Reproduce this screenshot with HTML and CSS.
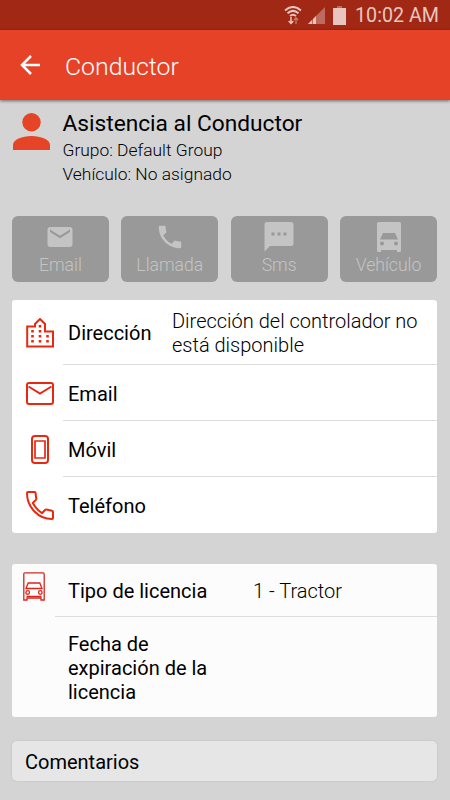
FILE: index.html
```html
<!DOCTYPE html>
<html lang="es">
<head>
  <meta charset="UTF-8">
  <title>Conductor</title>
  <link rel="stylesheet" href="styles.css">
</head>
<body>
  <div class="status">
    <svg class="wifi" width="18" height="19" viewBox="0 0 18 19" fill="none" stroke="#e8c5bf">
      <path d="M1 4.500Q9-2.500 17 4.500M3.500 7.300Q9 2.500 14.500 7.300M6 10Q9 7.500 12 10" stroke-width="2"/>
      <path d="M7 11v6M4.700 15L7 17.500 9.300 15" stroke-width="1.500"/>
      <path d="M12 18v-6M10 14l2-2.200L14 14" stroke="#c77c70" stroke-width="1.300"/>
    </svg>
    <svg class="signal" width="17" height="17" viewBox="0 0 17 17">
      <path d="M17 0v17H0z" fill="#bd6b5e"/>
      <path d="M0 17l4-4v4zM5 17v-5l3-3v8z" fill="#e8c5bf"/>
    </svg>
    <svg class="battery" width="13" height="19" viewBox="0 0 13 19">
      <path d="M4 0h5v2H4z" fill="#bd6b5e"/>
      <path d="M0 2h13v17H0z" fill="#e8c5bf"/>
    </svg>
    <span>10:02 AM</span>
  </div>

  <header>
    <svg width="20" height="20" viewBox="0 0 20 20" fill="none" stroke="#fff" stroke-width="2.500">
      <path d="M20 10H2M11 1l-9 9 9 9"/>
    </svg>
    <h1>Conductor</h1>
  </header>

  <div class="container">
    <div class="driver">
      <svg width="37" height="37" viewBox="0 0 37 37" fill="#e64427">
        <circle cx="18.500" cy="9.300" r="9.200"/>
        <path d="M0 37v-5c0-5.500 9-9 18.500-9S37 26.500 37 32v5z"/>
      </svg>
      <div>
        <h2>Asistencia al Conductor</h2>
        <p>Grupo: Default Group</p>
        <p>Vehículo: No asignado</p>
      </div>
    </div>

    <div class="actions">
      <button>
        <svg width="30" height="30" viewBox="0 0 24 24"><path d="M20 4H4c-1.100 0-2 .9-2 2v12c0 1.100.9 2 2 2h16c1.100 0 2-.9 2-2V6c0-1.100-.9-2-2-2zm0 4l-8 5-8-5V6l8 5 8-5z"/></svg>
        <span>Email</span>
      </button>
      <button>
        <svg width="30" height="30" viewBox="0 0 24 24"><path d="M6.620 10.790c1.440 2.830 3.760 5.140 6.590 6.590l2.200-2.200c.27-.27.67-.36 1.020-.24 1.120.37 2.330.57 3.570.57.550 0 1 .45 1 1V20c0 .55-.45 1-1 1-9.390 0-17-7.610-17-17 0-.55.45-1 1-1h3.500c.55 0 1 .45 1 1 0 1.250.2 2.450.57 3.570.11.35.03.74-.25 1.020z"/></svg>
        <span>Llamada</span>
      </button>
      <button>
        <svg width="30" height="30" viewBox="0 0 30 30"><path fill-rule="evenodd" d="M3 0h24a2.500 2.500 0 0 1 2.500 2.500v19A2.500 2.500 0 0 1 27 24H6L.5 29.500v-27A2.500 2.500 0 0 1 3 0zM7.500 10.500v3h3v-3zM13.500 10.500v3h3v-3zM19.500 10.500v3h3v-3z"/></svg>
        <span>Sms</span>
      </button>
      <button>
        <svg width="24" height="30" viewBox="0 0 24 30"><path fill-rule="evenodd" d="M1.500 0h21A1.500 1.500 0 0 1 24 1.500v27A1.500 1.500 0 0 1 22.500 30H20v-2H4v2H1.500A1.500 1.500 0 0 1 0 28.500v-27A1.500 1.500 0 0 1 1.500 0zM6 11l-3 6.500h18L18 11zM5 19.500a2 2 0 1 0 0 4 2 2 0 0 0 0-4zM19 19.500a2 2 0 1 0 0 4 2 2 0 0 0 0-4z"/></svg>
        <span>Vehículo</span>
      </button>
    </div>

    <div class="card contact">
      <div class="row address">
        <div class="icon">
          <svg width="28" height="30" viewBox="0 0 28 30" fill="none" stroke="#e62a10" stroke-width="2">
            <path d="M1.200 28.500V8.500H9V6l5-5 5 5v7.500h8v15z"/>
            <path d="M6.500 12v13M14 7v18M21.500 17v8" stroke-width="2.600" stroke-dasharray="2.600 2.400"/>
          </svg>
        </div>
        <div class="fields">
          <span class="label">Dirección</span>
          <span class="value">Dirección del controlador no está disponible</span>
        </div>
      </div>
      <div class="row">
        <div class="icon">
          <svg width="28" height="23" viewBox="0 0 28 23" fill="none" stroke="#e62a10" stroke-width="2">
            <rect x="1" y="1" width="26" height="21" rx="2"/>
            <path d="M2.500 4.500L14 11.500 25.500 4.500"/>
          </svg>
        </div>
        <div class="fields"><span class="label">Email</span></div>
      </div>
      <div class="row">
        <div class="icon">
          <svg width="18" height="29" viewBox="0 0 18 29" fill="none" stroke="#e62a10" stroke-width="2">
            <rect x="1" y="1" width="16" height="27" rx="3"/>
            <path d="M4 6h10v17H4z" stroke-width="1.700"/>
          </svg>
        </div>
        <div class="fields"><span class="label">Móvil</span></div>
      </div>
      <div class="row">
        <div class="icon">
          <svg width="28" height="29" viewBox="0 0 28 29" fill="none" stroke="#e62a10" stroke-width="2" stroke-linejoin="round">
            <path d="M2 1h6.500q1 0 1 1l.8 5.500q.1.800-.4 1.400L6.800 12q4 7 9.200 10.200l3-3.200q.6-.6 1.400-.4l5.600 1.200q1 .2 1 1.200v6q0 1-1 1C12 28 1 16 1 2q0-1 1-1z"/>
          </svg>
        </div>
        <div class="fields"><span class="label">Teléfono</span></div>
      </div>
    </div>

    <div class="card license">
      <div class="row">
        <div class="icon">
          <svg width="22" height="29" viewBox="0 0 22 29" fill="none" stroke="#d8261c" stroke-width="1.300">
            <path d="M2 .8h18q1.200 0 1.200 1.200v26H18v-2H4v2H.8V2Q.8.8 2 .8z"/>
            <path d="M3 16.500l2.200-5.500h11.600l2.200 5.500zM3.500 24.500h15"/>
            <circle cx="4.700" cy="20.500" r="1.800"/>
            <circle cx="17.300" cy="20.500" r="1.800"/>
          </svg>
        </div>
        <div class="fields">
          <span class="label">Tipo de licencia</span>
          <span class="value">1 - Tractor</span>
        </div>
      </div>
      <div class="row expiry">
        <div class="icon"></div>
        <div class="fields"><span class="label">Fecha de expiración de la licencia</span></div>
      </div>
    </div>

    <div class="card comments">Comentarios</div>
  </div>
</body>
</html>
```

FILE: styles.css
```css
* {
  box-sizing: border-box;
}
body {
  margin: 0;
  height: 800px;
  overflow: hidden;
  background: #d4d4d4;
  color: #000;
  font-family: Roboto, "Liberation Sans", sans-serif;
}
h1, h2, p {
  margin: 0;
}
svg {
  display: block;
  flex: none;
}
.status {
  display: flex;
  justify-content: flex-end;
  align-items: center;
  height: 30px;
  padding-right: 11px;
  background: #a02815;
  color: #e8c5bf;
  font-size: 19.7px;
}
.status span {
  padding-top: 1px;
}
.status .wifi {
  margin-right: 6px;
}
.status .signal {
  margin-right: 8px;
}
.status .battery {
  margin-right: 9px;
}
header {
  display: flex;
  align-items: center;
  gap: 25px;
  height: 70px;
  padding: 0 20px;
  background: #e64227;
  color: #fff;
  box-shadow: 0 1px 3px rgba(0,0,0,0.5);
}
header h1 {
  padding-top: 2px;
  font-size: 24.8px;
  font-weight: 300;
}
.container {
  padding: 0 13px 0 12px;
}
.driver {
  display: flex;
  gap: 13px;
  height: 116px;
  padding-top: 10px;
  padding-left: 0.5px;
}
.driver svg {
  margin-top: 3px;
}
.driver h2 {
  font-size: 22.7px;
  font-weight: 400;
  line-height: 27px;
}
.driver p {
  position: relative;
  top: 1px;
  font-size: 17.4px;
  font-weight: 300;
  line-height: 24px;
}
.actions {
  display: grid;
  grid-template-columns: repeat(4, 1fr);
  gap: 12.4px;
}
button {
  display: flex;
  flex-direction: column;
  align-items: center;
  height: 66px;
  padding: 6px 0 0;
  background: #999;
  color: #c4c4c4;
  border: none;
  border-radius: 6px;
  font-family: inherit;
  font-size: 17.6px;
  font-weight: 300;
}
button svg {
  fill: #c4c4c4;
}
button span {
  line-height: 24px;
  margin-top: 1px;
}
.card {
  background: #fff;
  border-radius: 3px;
}
.contact {
  height: 232.5px;
  margin-top: 18px;
}
.row {
  display: flex;
  height: 56px;
}
.icon {
  display: flex;
  justify-content: center;
  align-items: center;
  width: 55px;
}
.contact .icon {
  width: 51px;
  padding-left: 5px;
}
.fields {
  display: flex;
  flex: 1;
  align-items: center;
  padding-top: 2px;
  padding-left: 5px;
  border-bottom: 1px solid #ddd;
  font-size: 20px;
  line-height: 24px;
}
.row:last-child .fields {
  border-bottom: none;
}
.address {
  height: 65px;
}
.label {
  width: 104px;
}
.value {
  flex: 1;
  font-weight: 300;
}
.license {
  height: 153px;
  margin-top: 31px;
  background: #fcfcfc;
}
.license .row {
  height: 53px;
}
.license .icon {
  width: 43px;
  padding-bottom: 8px;
}
.license .fields {
  padding-left: 13px;
}
.license .label {
  width: 185px;
}
.license .expiry {
  height: 100px;
}
.expiry .label {
  padding-right: 35px;
}
.comments {
  height: 40px;
  margin-top: 24.5px;
  padding-left: 13px;
  background: #e6e6e6;
  border-radius: 5px;
  box-shadow: 0 0 1px 1px rgba(0,0,0,0.04);
  font-size: 20px;
  line-height: 42px;
}
```
